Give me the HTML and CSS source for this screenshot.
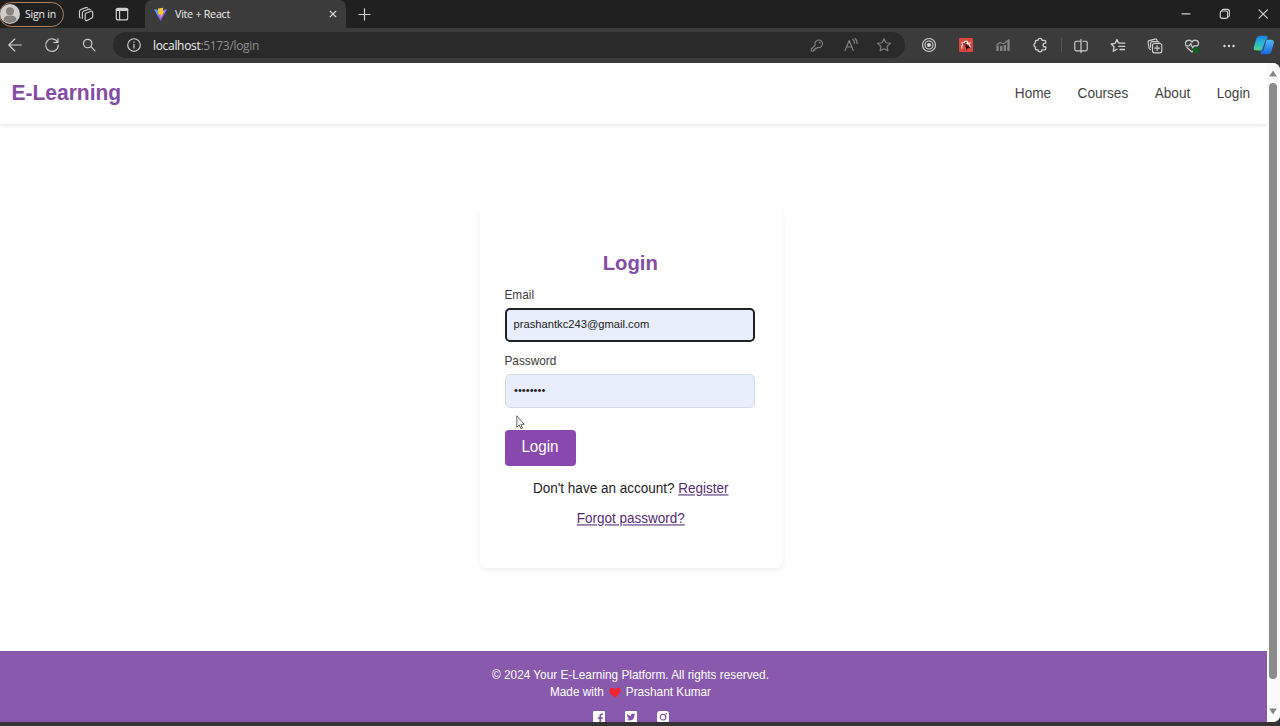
FILE: index.html
```html
<!DOCTYPE html>
<html lang="en">
<head>
<meta charset="utf-8">
<title>Vite + React</title>
<link rel="stylesheet" href="styles.css">
</head>
<body>
<div class="browser">
  <div class="tabstrip">
    <div class="profile">
      <svg class="avatar" viewBox="0 0 20 20"><circle cx="10" cy="10" r="10" fill="#d0cecc"/><circle cx="10" cy="7.3" r="4" fill="#858280"/><path d="M3.500 16.200c.3-3.800 2.800-4.700 6.500-4.700s6.200.9 6.500 4.700A9 9 0 0 1 10 19a9 9 0 0 1-6.500-2.800z" fill="#858280"/></svg>
      <span>Sign in</span>
    </div>
    <svg class="icon workspaces" viewBox="0 0 16 16"><path d="M7.800 7.300 13 5.300q1.700-.5 1.700 1.200v4q0 1-1 1.500l-4.500 2.400q-1.900.7-2-1.200V8.500q0-.9.600-1.200M4.400 12.500V7q0-1.200 1-1.700l5.100-2.100q1.300-.4 1.800.5M1.500 11V5.500q0-1.200 1-1.700l5.200-2.200q1.500-.4 1.900.4M1.500 11q.1.700.8 1"/></svg>
    <svg class="icon tabactions" viewBox="0 0 16 16"><rect x="2.300" y="2.300" width="11.400" height="11.600" rx="2"/><path d="M2.800 3.800h10.400" stroke-width="2.400"/><path d="M5.600 5v8.500"/></svg>
    <div class="tab">
      <svg class="vite" viewBox="0 0 16 16"><defs><linearGradient id="v" x1="0" y1="0" x2=".7" y2="1"><stop stop-color="#41b7f4"/><stop offset="1" stop-color="#b23cf0"/></linearGradient></defs><path d="M1 2.300 8 3.500l7-1.200L8 15z" fill="url(#v)"/><path d="m5.400 1.700 5.500-1-.5 4.200 1.700-.3-4.300 7.500.5-4.300-2.600.4z" fill="#ffc530"/></svg>
      <span class="tab-title">Vite + React</span>
      <svg class="tab-close" viewBox="0 0 8 8"><path d="m.8.8 6.400 6.400m0-6.400L.8 7.200"/></svg>
    </div>
    <svg class="icon newtab" viewBox="0 0 14 14"><path d="M7 1v12M1 7h12"/></svg>
    <div class="window-controls">
      <svg class="icon" viewBox="0 0 16 16"><path d="M4 7.800h8"/></svg>
      <svg class="icon" viewBox="0 0 16 16"><rect x="3.300" y="5" width="7.300" height="7.300" rx="1.500"/><path d="M4.800 4.600q.3-1.200 1.700-1.200h3.700q2.200 0 2.200 2.200v3.700q0 1.200-1.300 1.700"/></svg>
      <svg class="icon" viewBox="0 0 16 16"><path d="m4 3.800 8.400 8.400m0-8.400L4 12.200"/></svg>
    </div>
  </div>

  <div class="toolbar">
    <div class="slots nav-buttons">
      <svg class="icon" viewBox="0 0 16 16"><path d="M14.300 8H1.800m6-6-6 6 6 6"/></svg>
      <svg class="icon" viewBox="0 0 16 16"><path d="M13.600 5.200A6.300 6.300 0 1 0 14.300 8M13.900 1.500v4H9.800"/></svg>
      <svg class="icon" viewBox="0 0 16 16"><circle cx="6.700" cy="6.500" r="4.200"/><path d="m9.900 9.700 4.100 4.200"/></svg>
    </div>
    <div class="omnibox">
      <svg class="icon info" viewBox="0 0 16 16"><circle cx="8" cy="8" r="6.300"/><path d="M8 7.200v4M8 4.700v.6"/></svg>
      <span class="url"><b>localhost</b>:5173/login</span>
      <div class="omni-actions">
        <svg class="icon" viewBox="0 0 16 16"><path d="M6.200 8.200a3.800 3.800 0 1 1 2.300 2.200l-1 1H6v1.400H4.600V14H2.300v-2z"/><circle cx="10.700" cy="5.600" r=".4"/></svg>
        <svg class="icon" viewBox="0 0 16 16"><path d="m2 13.500 4.200-10 4 10M3.500 10H9M9.700 2.200q2 1.500 1.700 4M12 1.500q2.500 2 2 5.200"/></svg>
        <svg class="icon" viewBox="0 0 16 16"><path d="m8 1.700 1.900 4 4.500.6-3.300 3.100.8 4.400L8 11.700l-3.900 2.100.8-4.400-3.300-3.100 4.500-.6z"/></svg>
      </div>
    </div>
    <div class="slots extensions">
      <svg class="icon" viewBox="0 0 16 16"><circle cx="8" cy="8" r="6.500"/><circle cx="8" cy="8" r="4"/><circle cx="8" cy="8" r="1.500" fill="#ddd"/></svg>
      <svg class="icon" viewBox="0 0 16 16"><rect x="1" y="1" width="14" height="14" rx="1" fill="#d9463d" stroke="none"/><path d="M3.500 6h3V4.300h3V6h3M4 9l1-2h6l1 2M3.800 8.500V11M12 8.500v2" stroke="#ffe2dc"/><path d="m7 6 5.500 5-2.500.3L8.400 13.300z" fill="#240d0c" stroke="none"/><circle cx="6" cy="7" r="1" fill="#651c19" stroke="none"/></svg>
      <svg class="icon muted" viewBox="0 0 16 16"><path d="M2.500 8.500v5.500M6.200 9v5M9.900 8v6M13.500 3v11" stroke-width="2.300" stroke-linecap="butt"/><path d="M1.800 7.800 5 5.500l3.500 1.200L14 2.700"/></svg>
      <svg class="icon" viewBox="0 0 16 16"><path d="M6 3.300a2 2 0 0 1 4 0h2.500q1.300 0 1.300 1.300v1.500H13a1.900 1.900 0 0 0 0 3.800h.8v1.600q0 1.300-1.300 1.300H10a2 2 0 0 1-4 0H4.400q-1 0-1-1V10a2.100 2.100 0 0 1 0-4V4.300q0-1 1-1z" stroke-width="1.300"/></svg>
    </div>
    <div class="slots tools">
      <svg class="icon" viewBox="0 0 16 16"><path d="M8 3.200H3.300q-1.500 0-1.500 1.500v6.600q0 1.500 1.500 1.500h9.400q1.500 0 1.500-1.500V4.700q0-1.500-1.500-1.500H10M8 1.300v13.400"/></svg>
      <svg class="icon" viewBox="0 0 16 16"><path d="M9.300 5.200H8.700L6.900 1.500 5.100 5.400 1.200 6l2.800 2.800-.7 4.500 3.600-2M9.500 5.200h5.300M8.700 8.300h6.100M10 11.500h4.500" stroke-width="1.300"/></svg>
      <svg class="icon" viewBox="0 0 16 16"><rect x="5.500" y="5.500" width="9.300" height="9.300" rx="2"/><path d="M10.100 7.600v5M7.600 10.100h5M3.500 11.300q-1 0-1.300-1L1 4.500q-.3-1.500 1-1.900l6-1.500q1.500-.3 2 1l.2 1M3.600 9.200V5.500q0-1.900 1.900-1.900h4.800q1.400 0 1.700.8"/></svg>
      <svg class="icon" viewBox="0 0 16 16"><path d="M8 4.200C6.300.8 1 2 1.500 6q.1.500.3.900M8 4.200C9.700.8 15 2 14.500 6q-.1.700-.4 1.100M3 9.500 8 14l1.500-1.400M1.800 7.800h3.500l1.400-2.200 2 4.400L10 7.800h3.500"/><circle cx="11.800" cy="12" r="3.100" fill="#12601f" stroke="none"/></svg>
      <svg class="icon" viewBox="0 0 16 16"><g fill="#ddd" stroke="none"><circle cx="3.500" cy="8" r="1.200"/><circle cx="8" cy="8" r="1.200"/><circle cx="12.500" cy="8" r="1.200"/></g></svg>
    </div>
    <svg class="copilot" viewBox="0 0 22 20"><defs><linearGradient id="c1" x1="0" y1="0" x2="0" y2="1"><stop stop-color="#1483e8"/><stop offset=".5" stop-color="#25b9c9"/><stop offset="1" stop-color="#54d28b"/></linearGradient><linearGradient id="c2" x1="0" y1="0" x2="0" y2="1"><stop stop-color="#52b8f7"/><stop offset="1" stop-color="#1768df"/></linearGradient></defs><path d="M7 .7h6q2 0 1.500 2L11.500 13q-.8 2.500-3 2.500H3.300Q.2 15.500.8 12L3.500 3.600Q4.500.7 7 .7z" fill="url(#c1)"/><path d="M13.500 4.800h5q3 .2 2.300 3.500l-2.500 8.200q-.8 2.800-3.500 2.800h-6q-1.700 0-1-2L10.700 7q.7-2.200 2.800-2.200z" fill="url(#c2)"/><path d="m13.200 4.300-3.700 12" stroke="#214d78" stroke-width="1.100"/></svg>
  </div>

  <div class="viewport">
    <div class="page">
      <header class="site-header">
        <div class="logo">E-Learning</div>
        <nav class="nav"><a>Home</a><a>Courses</a><a>About</a><a>Login</a></nav>
      </header>
      <main class="main">
        <section class="card">
          <h2 class="card-title">Login</h2>
          <label class="label">Email</label>
          <div class="field focused">prashantkc243@gmail.com</div>
          <label class="label">Password</label>
          <div class="field password">••••••••</div>
          <button class="submit"><span>Login</span></button>
          <p class="line">Don't have an account? <a class="link">Register</a></p>
          <p class="line"><a class="link">Forgot password?</a></p>
        </section>
      </main>
      <footer class="footer">
        <p class="foot-copy">© 2024 Your E-Learning Platform. All rights reserved.</p>
        <p class="foot-made"><span>Made with</span><svg class="heart" viewBox="0 0 12 11"><path d="M6 10.700C2.500 8 .3 6 .3 3.500.3.500 4.500-.5 6 2.400 7.500-.5 11.700.5 11.700 3.500 11.700 6 9.500 8 6 10.700z" fill="#f3252f"/></svg><span>Prashant Kumar</span></p>
        <div class="social">
          <svg viewBox="0 0 12 12"><rect width="12" height="12" rx="1" fill="#fff"/><path d="M6.400 12V8H4.900V6.200h1.500V5q0-2.600 2.500-2.600H10v1.700H8.900q-.7 0-.7.900v1.200h1.700L9.700 8H8.200v4z" fill="#8558ac"/></svg>
          <svg viewBox="0 0 12 12"><rect width="12" height="12" rx="1" fill="#fff"/><path d="M2 3q1.700 1.800 3.900 1.900Q5.600 2.600 7.500 2.400q.8 0 1.300.5l1.200-.4-.6 1 .9-.2-.9 1Q9.300 9.500 4.700 9.500 3 9.500 1.800 8.700q1.400 0 2.300-.7-1.200-.2-1.500-1.300h.7Q2.100 6.200 2.100 5l.7.2Q1.500 4.200 2 3z" fill="#8558ac"/></svg>
          <svg viewBox="0 0 12 12"><rect width="12" height="12" rx="3" fill="#fff"/><circle cx="6" cy="6.200" r="2.800" fill="none" stroke="#8558ac" stroke-width="1.200"/><circle cx="9.300" cy="2.800" r=".8" fill="#8558ac"/></svg>
        </div>
      </footer>
    </div>
    <div class="scrollbar">
      <svg class="arrow" viewBox="0 0 8 7"><path d="M4 .5 7.800 6.500H.2z"/></svg>
      <div class="thumb"></div>
      <svg class="arrow" viewBox="0 0 8 7"><path d="M.2.500h7.600L4 6.500z"/></svg>
    </div>
  </div>
  <svg class="cursor" viewBox="0 0 9 15"><path d="M.8.800v11.400l2.500-2.300 1.700 3.900 1.500-.7-1.600-3.800h3.300z"/></svg>
</div>
</body>
</html>
```
FILE: styles.css
```css
* { box-sizing: border-box; }
body { margin: 0; font-family: "Liberation Sans", Arial, sans-serif; }
p, h2 { margin: 0; }
svg { display: block; flex: none; }
.browser { width: 1280px; height: 726px; overflow: hidden; display: flex; flex-direction: column; background: #333; position: relative; }
.icon { width: 16px; height: 16px; fill: none; stroke: #d0d0d0; stroke-width: 1.15; stroke-linecap: round; stroke-linejoin: round; }

.tabstrip { height: 28px; flex: none; background: #202020; display: flex; align-items: center; font-family: "Open Sans", sans-serif; color: #eee; }
.profile { width: 65px; height: 25px; margin-left: -1px; border: 1px solid #b5825b; border-radius: 13px; display: flex; align-items: center; gap: 5px; font-size: 10.500px; letter-spacing: -.2px; white-space: nowrap; }
.avatar { width: 20px; height: 20px; }
.workspaces { margin-left: 14px; }
.tabactions { margin-left: 20px; }
.tab { width: 201px; height: 28px; margin-left: 15px; background: #3b3b3b; border-radius: 7px 7px 0 0; display: flex; align-items: center; padding: 0 9px 0 8px; }
.vite { width: 15px; height: 15px; }
.tab-title { margin-left: 7px; padding-bottom: 1px; font-size: 10.800px; letter-spacing: -.3px; }
.tab-close { width: 8px; height: 8px; margin-left: auto; stroke: #ddd; stroke-width: 1.200; fill: none; }
.newtab { width: 13px; height: 13px; margin-left: 12px; stroke-width: 1.300; }
.window-controls { margin-left: auto; padding-right: 9px; display: flex; gap: 22.500px; }

.toolbar { height: 34.500px; flex: none; background: #3b3b3b; display: flex; align-items: center; }
.slots { display: grid; grid-auto-flow: column; grid-auto-columns: 37px; justify-items: center; align-items: center; }
.nav-buttons { margin-left: -4px; }
.omnibox { width: 792px; height: 26px; margin-left: 6px; border-radius: 13px; background: #2a2a2a; display: flex; align-items: center; padding: 0 13px; }
.url { margin-left: 11px; font: 12px "Open Sans", sans-serif; letter-spacing: -.32px; color: #8f8f8f; }
.url b { font-weight: 400; color: #f0f0f0; }
.omni-actions { margin-left: auto; display: flex; gap: 17.500px; }
.omni-actions .icon { stroke: #808080; }
.extensions { margin-left: 5px; }
.extensions .muted { stroke: #858585; }
.tools { border-left: 1px solid #555; margin-left: 3px; grid-auto-columns: 37.200px; height: 14px; }
.copilot { width: 22px; height: 20px; margin-left: 5px; }

.viewport { height: 659.500px; flex: none; display: flex; background: #fff; border-radius: 0 7px 7px 0; overflow: hidden; }
.page { width: 1267px; display: flex; flex-direction: column; overflow: hidden; }
.site-header { height: 61.500px; flex: none; display: flex; justify-content: space-between; align-items: center; padding: 0 17px 0 11.500px; box-shadow: 0 2px 4px rgba(0,0,0,.09); }
/* Lettering is drawn slightly taller than its natural proportions */
.nav a, .label, .submit span, .line, .foot-copy, .foot-made span { transform: scaleY(1.08); }
.logo, .card-title { transform: scaleY(1.03); }
.logo { font-size: 21px; font-weight: 700; color: #834da5; }
.nav { display: flex; gap: 26.500px; font-size: 13.600px; color: #444; }
.nav a { display: block; }
.main { height: 527px; flex: none; display: flex; justify-content: center; padding-top: 83px; }
.card { width: 303px; height: 361px; margin-right: 4px; padding: 43px 28px 0 24.500px; border-radius: 7px; box-shadow: 0 2px 5px rgba(0,0,0,.07); display: flex; flex-direction: column; }
.card-title { font-size: 20.300px; line-height: 26px; color: #834da5; text-align: center; padding-left: 1px; margin-bottom: 12px; }
.label { font-size: 11.800px; line-height: 14px; color: #3c3c3c; margin-bottom: 6px; }
.field { height: 34px; flex: none; border: 1px solid #d3d8e2; border-radius: 5px; background: #e8eefc; padding: 0 8.500px; font-size: 11.200px; line-height: 30px; color: #202020; }
.focused { border: 2px solid #202124; padding: 0 7px; margin-bottom: 12px; line-height: 28px; }
.submit { align-self: flex-start; width: 71px; height: 36px; margin-top: 22px; margin-bottom: 15px; padding: 0 0 3px; border: 0; border-radius: 4px; background: #8948ae; color: #fff; font: 15.200px "Liberation Sans", Arial, sans-serif; }
.submit span { display: inline-block; }
.line { font-size: 13.500px; line-height: 16px; text-align: center; padding-left: 2px; margin-bottom: 14px; color: #222; white-space: nowrap; }
.link { color: #552b77; text-decoration: underline; }
.footer { height: 73px; flex: none; background: #8859ac; color: #fff; padding: 16px 6px 0 0; font-size: 11.800px; line-height: 17px; text-align: center; }
.foot-made { display: flex; justify-content: center; align-items: center; gap: 5px; }
.heart { width: 12px; height: 11px; }
.social { display: flex; justify-content: center; gap: 20px; margin-top: 10px; }
.social svg { width: 12px; height: 12px; }
.scrollbar { width: 13px; background: #fafafa; display: flex; flex-direction: column; align-items: center; padding: 7px 1px 7px 0; justify-content: space-between; }
.arrow { width: 8px; height: 7px; fill: #858585; }
.thumb { width: 8px; height: 596px; margin-bottom: 23px; border-radius: 4px; background: #8b8b8b; }
.cursor { position: absolute; left: 516px; top: 415px; width: 9px; height: 15px; fill: #fff; stroke: #555; stroke-width: .9; }
```
